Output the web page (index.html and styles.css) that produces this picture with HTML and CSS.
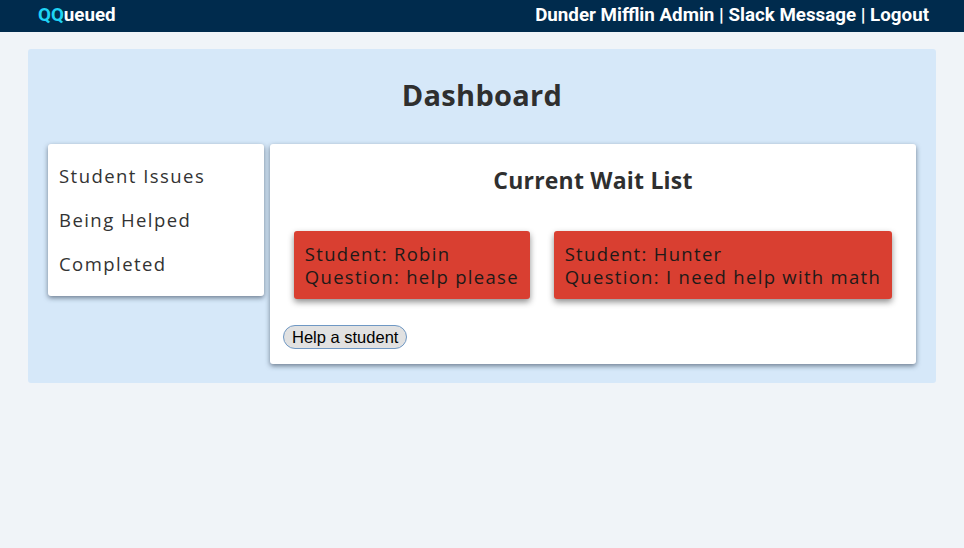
FILE: index.html
```html
<!DOCTYPE html>
<html>
<head>
<meta charset="utf-8">
<link rel="stylesheet" href="styles.css">
</head>
<body>
<header class="nav">
  <div class="brand"><span class="qq">QQ</span>ueued</div>
  <div class="links">Dunder Mifflin Admin | Slack Message | Logout</div>
</header>
<main class="panel">
  <h1 class="title">Dashboard</h1>
  <div class="row">
    <aside class="side card">
      <div class="side-item">Student Issues</div>
      <div class="side-item">Being Helped</div>
      <div class="side-item">Completed</div>
    </aside>
    <section class="main card">
      <h2 class="sub">Current Wait List</h2>
      <div class="tickets">
        <div class="ticket">Student: Robin<br>Question: help please</div>
        <div class="ticket">Student: Hunter<br>Question: I need help with math</div>
      </div>
      <button class="help">Help a student</button>
    </section>
  </div>
</main>
</body>
</html>
```
FILE: styles.css
```css
* { box-sizing: border-box; }
html, body { margin: 0; }
body {
  background: #f0f4f8;
  width: 964px;
  height: 548px;
  font-family: "Open Sans", sans-serif;
  color: #2f2f2f;
}
.nav {
  height: 32px;
  background: #002b4d;
  display: flex;
  justify-content: space-between;
  align-items: center;
  padding: 0 35px 3px 38px;
  font-family: Roboto, "Liberation Sans", sans-serif;
  font-weight: 700;
  font-size: 18.75px;
  color: #fff;
}
.qq { color: #1fd3f5; }
.panel {
  margin: 17px 28px 0 28px;
  background: #d6e8f9;
  border-radius: 3px;
  padding: 26px 20px 19px 20px;
}
.title {
  margin: 0 0 29px 0;
  text-align: center;
  font-size: 29px;
  line-height: 40px;
  font-weight: 700;
  letter-spacing: 0.3px;
  color: #2f2f2f;
}
.row {
  display: flex;
  align-items: flex-start;
  gap: 6px;
}
.card {
  background: #fff;
  border-radius: 3px;
  box-shadow: 0 2px 5px rgba(40, 55, 75, 0.6);
}
.side {
  width: 216px;
  padding: 10px 11px 10px 11px;
}
.side-item {
  font-size: 18.5px;
  line-height: 44px;
  color: #333;
  letter-spacing: 1.45px;
}
.main {
  flex: 1;
  padding: 21px 0 15px 0;
}
.sub {
  margin: 0;
  text-align: center;
  font-size: 23px;
  line-height: 30px;
  font-weight: 700;
  letter-spacing: 0.2px;
}
.tickets {
  display: flex;
  justify-content: space-evenly;
  margin-top: 36px;
}
.ticket {
  background: #d93f31;
  color: #1e1a18;
  border-radius: 3px;
  padding: 11px 11px;
  font-size: 18.5px;
  line-height: 23px;
  letter-spacing: 1.3px;
  box-shadow: 0 3px 6px rgba(0, 0, 0, 0.45);
}
.help {
  margin: 26px 0 0 13px;
  font-family: "Liberation Sans", Arial, sans-serif;
  font-size: 16.5px;
  line-height: 18px;
  padding: 2px 8px;
  background: #e1e1e1;
  border: 1px solid #6f98c4;
  border-radius: 12px;
  color: #000;
}
```
